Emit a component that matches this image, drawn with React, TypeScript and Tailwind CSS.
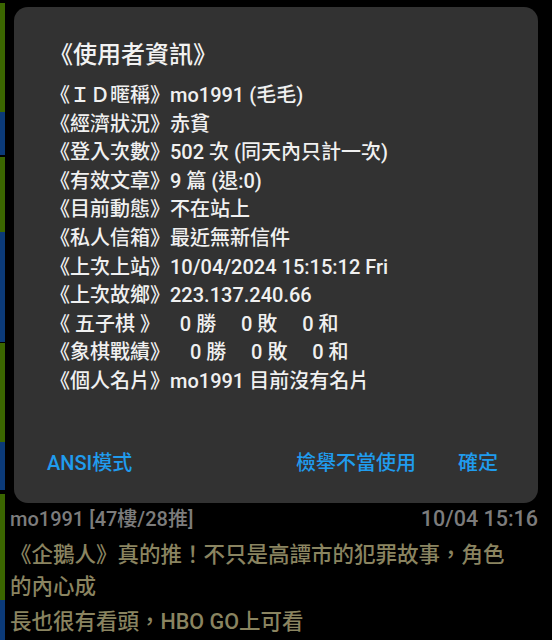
import React from 'react';

const font = { fontFamily: 'Roboto, "Noto Sans CJK TC", sans-serif' };

// colour bars on the left edge of each post row (behind the dialog)
const bars = [
  { h: 3, c: 'bg-black' },
  { h: 109, c: 'bg-[#3b6600]' },
  { h: 43, c: 'bg-[#0b3a78]' },
  { h: 2, c: 'bg-black' },
  { h: 75, c: 'bg-[#3b6600]' },
  { h: 110, c: 'bg-[#0b3a78]' },
  { h: 1, c: 'bg-black' },
  { h: 99, c: 'bg-[#3b6600]' },
  { h: 48, c: 'bg-[#0b3a78]' },
  { h: 4, c: 'bg-black' },
  { h: 106, c: 'bg-[#3b6600]' },
  { h: 40, c: 'bg-[#0b3a78]' },
];

const rows: [string, string][] = [
  ['《ＩＤ暱稱》', 'mo1991 (毛毛)'],
  ['《經濟狀況》', '赤貧'],
  ['《登入次數》', '502 次 (同天內只計一次)'],
  ['《有效文章》', '9 篇 (退:0)'],
  ['《目前動態》', '不在站上'],
  ['《私人信箱》', '最近無新信件'],
  ['《上次上站》', '10/04/2024 15:15:12 Fri'],
  ['《上次故鄉》', '223.137.240.66'],
  ['《 五子棋 》', '    0 勝     0 敗     0 和'],
  ['《象棋戰績》', '    0 勝     0 敗     0 和'],
  ['《個人名片》', 'mo1991 目前沒有名片'],
];

function UserDialog() {
  return (
    <div className="absolute left-[14px] top-[7px] w-[524px] h-[496px] rounded-[14px] bg-[#323232] flex flex-col pt-[32px] pb-[16px]">
      <div className="pl-[35px] text-[24px] leading-[32px] font-medium text-[#f2f2f2]">《使用者資訊》</div>
      <div className="pl-[36px] mt-[10px] flex flex-col text-[20px] leading-[28.6px] font-medium text-[#f0f0f0]">
        {rows.map(([label, value]) => (
          <div key={label} className="flex whitespace-pre">
            <span>{label}</span>
            <span>{value}</span>
          </div>
        ))}
      </div>
      <div className="mt-auto h-[48px] flex items-center justify-between pl-[25px] pr-[32px] text-[20px] font-medium text-[#209cee]">
        <button className="px-2 h-full">ANSI模式</button>
        <div className="flex items-center gap-[26px] h-full">
          <button className="px-2 h-full">檢舉不當使用</button>
          <button className="px-2 h-full">確定</button>
        </div>
      </div>
    </div>
  );
}

export default function App() {
  return (
    <div className="relative w-[552px] h-[640px] overflow-hidden bg-black flex" style={font}>
      <div className="w-[5px] flex flex-col shrink-0">
        {bars.map((b, i) => (
          <div key={i} className={b.c} style={{ height: b.h }} />
        ))}
      </div>
      <div className="flex-1 flex flex-col pl-[5px] pr-[14px]">
        <div className="h-[505px] shrink-0" />
        <div className="flex justify-between items-center h-[28px] font-medium text-[#7c7c7c]">
          <span className="text-[20px]">mo1991 [47樓/28推]</span>
          <span className="text-[21.5px]">10/04 15:16</span>
        </div>
        <div className="text-[21.5px] leading-[32px] font-medium text-[#8a8460] mt-[6px]">
          <div>《企鵝人》真的推！不只是高譚市的犯罪故事，角色</div>
          <div>的內心成</div>
          <div className="mt-[3px]">長也很有看頭，HBO GO上可看</div>
        </div>
      </div>
      <UserDialog />
    </div>
  );
}
